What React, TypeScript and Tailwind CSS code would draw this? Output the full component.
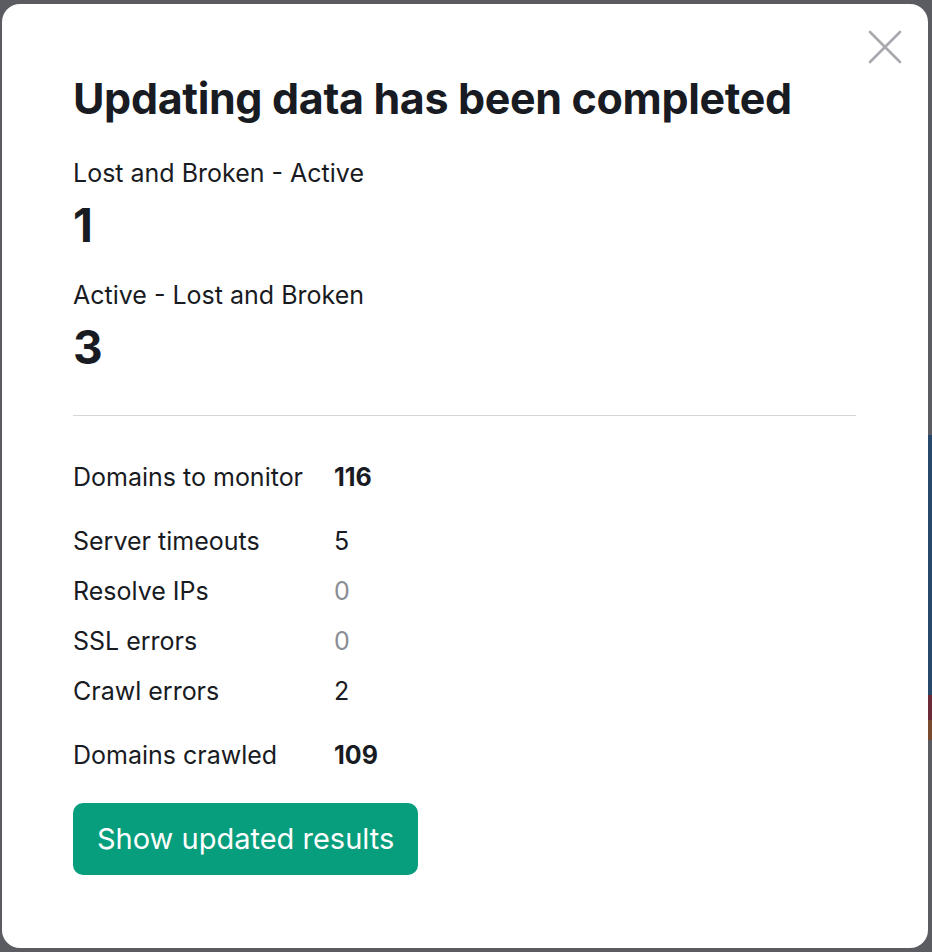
const font = { fontFamily: "Inter, 'Noto Sans', sans-serif" }

const rows = [
  { label: "Server timeouts", value: "5", muted: false },
  { label: "Resolve IPs", value: "0", muted: true },
  { label: "SSL errors", value: "0", muted: true },
  { label: "Crawl errors", value: "2", muted: false },
]

export default function App() {
  return (
    <div className="flex w-[932px] h-[952px] bg-[#5b5c62] overflow-hidden" style={font}>
      <div className="w-[2px] shrink-0" />
      <div className="mt-[4px] h-[944px] w-[926px] shrink-0 rounded-[18px] bg-white text-[#191b23] pl-[71px] pr-[72px] relative">
        {/* close */}
        <button className="absolute right-[26px] top-[26px] text-[#a8a9ae]">
          <svg viewBox="0 0 34 34" className="w-[34px] h-[34px]" fill="none" stroke="currentColor" strokeWidth={2.6} strokeLinecap="round">
            <path d="M2 2L32 32M32 2L2 32" />
          </svg>
        </button>

        <h1 className="pt-[70px] text-[43px] leading-[48px] font-bold tracking-[-0.35px]">
          Updating data has been completed
        </h1>

        <div className="mt-[34px]">
          <p className="text-[25px] leading-[34px]">Lost and Broken - Active</p>
          <p className="mt-[9px] text-[46px] leading-[52px] font-bold">1</p>
          <p className="mt-[27px] text-[25px] leading-[34px]">Active - Lost and Broken</p>
          <p className="mt-[9px] text-[46px] leading-[52px] font-bold">3</p>
        </div>

        <div className="mt-[42px] h-px bg-[#d5d6da]" />

        <div className="mt-[44px] text-[25px] leading-[34px]">
          <div className="grid grid-cols-[261px_1fr]">
            <span>Domains to monitor</span>
            <span className="font-bold">116</span>
          </div>
          <div className="mt-[30px] flex flex-col gap-[16px]">
            {rows.map((r) => (
              <div key={r.label} className="grid grid-cols-[261px_1fr]">
                <span>{r.label}</span>
                <span className={r.muted ? "text-[#8a8d95]" : ""}>{r.value}</span>
              </div>
            ))}
          </div>
          <div className="mt-[30px] grid grid-cols-[261px_1fr]">
            <span>Domains crawled</span>
            <span className="font-bold">109</span>
          </div>
        </div>

        <button className="mt-[31px] h-[72px] px-[24px] rounded-[10px] bg-[#069e7d] text-white text-[29px] leading-[34px]">
          Show updated results
        </button>
      </div>
      <div className="w-[4px] shrink-0 flex flex-col">
        <div className="h-[435px]" />
        <div className="h-[260px] bg-[#27486a]" />
        <div className="h-[25px] bg-[#6b2a35]" />
        <div className="h-[20px] bg-[#7a4a2e]" />
      </div>
    </div>
  )
}
